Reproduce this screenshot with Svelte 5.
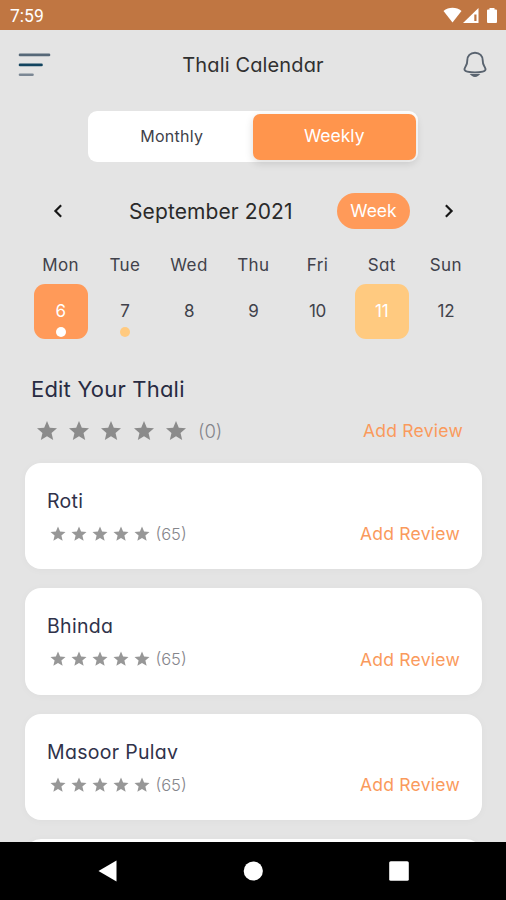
<script>
  let view = "Weekly";
  let selected = 6;

  const views = ["Monthly", "Weekly"];

  const days = [
    { name: "Mon", date: 6, dot: true },
    { name: "Tue", date: 7, dot: true },
    { name: "Wed", date: 8 },
    { name: "Thu", date: 9 },
    { name: "Fri", date: 10 },
    { name: "Sat", date: 11, today: true },
    { name: "Sun", date: 12 },
  ];

  const dishes = [
    { name: "Roti", reviews: 65 },
    { name: "Bhinda", reviews: 65 },
    { name: "Masoor Pulav", reviews: 65 },
  ];

  const stars = [1, 2, 3, 4, 5];
  const starPath =
    "M12 17.27 18.18 21l-1.64-7.03L22 9.24l-7.19-.61L12 2 9.19 8.63 2 9.24l5.46 4.73L5.82 21z";
</script>

<main>
  <div class="status">
    <span>7:59</span>
    <svg width="56" height="18" viewBox="0 0 56 18" fill="#fff">
      <path d="M0.5 4C5.5-.2 13.5-.2 18.5 4L9.5 15.5z" />
      <path d="M20 16 35.5 1v15z" />
      <path d="M31.3 7.5h2.2V14h-2.2z" fill="#c07642" />
      <path d="M46.5 1h5v1.5h1.5q1 0 1 1V15q0 1-1 1h-8q-1 0-1-1V3.5q0-1 1-1h1.5z" />
    </svg>
  </div>

  <header>
    <svg class="menu" width="34" height="26" viewBox="0 0 34 26" fill="none" stroke-width="2.6" stroke-linecap="round">
      <path d="M2 2.9h29" stroke="#566878" />
      <path d="M2 12.9h21.5" stroke="#12445f" />
      <path d="M2 22.8h12.500" stroke="#7b8794" />
    </svg>
    <h1>Thali Calendar</h1>
    <svg width="26" height="28" viewBox="0 0 26 28" fill="none" stroke="#59636f" stroke-width="1.9" stroke-linecap="round">
      <path d="M13 1.700C8.200 1.700 5.300 5.100 5.300 9.300c0 4.200-.8 4.800-2 6.700-1.600 2.600-.7 4 2 4.600 4.700 1 10.700 1 15.400 0 2.700-.6 3.600-2 2-4.600-1.200-1.900-2-2.500-2-6.700 0-4.200-2.900-7.600-7.700-7.600z" />
      <path d="M10.300 24c1.600 1.300 3.800 1.300 5.400 0z" fill="#59636f" />
    </svg>
  </header>

  <div class="toggle">
    {#each views as v}
      <button class:active={view === v} on:click={() => (view = v)}>{v}</button>
    {/each}
  </div>

  <div class="month">
    <svg width="26" height="26" viewBox="0 0 24 24" fill="#171717">
      <path d="M15.61 7.41 14.2 6l-6 6 6 6 1.41-1.41L11.03 12z" />
    </svg>
    <span class="month-name">September 2021</span>
    <button class="week-btn">Week</button>
    <svg width="26" height="26" viewBox="0 0 24 24" fill="#171717">
      <path d="M8.39 7.41 9.8 6l6 6-6 6-1.41-1.41L12.97 12z" />
    </svg>
  </div>

  <div class="days">
    {#each days as day}
      <div class="day">
        <span class="day-name">{day.name}</span>
        <button
          class="date"
          class:today={day.today}
          class:selected={selected === day.date}
          on:click={() => (selected = day.date)}
        >
          {day.date}
          {#if day.dot}<i class="dot"></i>{/if}
        </button>
      </div>
    {/each}
  </div>

  <section class="thali">
    <h2>Edit Your Thali</h2>
    <div class="rating">
      {#each stars as s}
        <svg viewBox="0 0 24 24"><path d={starPath} /></svg>
      {/each}
      <span class="count">(0)</span>
      <button class="review">Add Review</button>
    </div>
  </section>

  <section class="list">
    {#each dishes as dish}
      <article class="card">
        <h3>{dish.name}</h3>
        <div class="rating small">
          {#each stars as s}
            <svg viewBox="0 0 24 24"><path d={starPath} /></svg>
          {/each}
          <span class="count">({dish.reviews})</span>
          <button class="review">Add Review</button>
        </div>
      </article>
    {/each}
    <article class="card"></article>
  </section>

  <nav>
    <svg width="24" height="24" viewBox="0 0 24 24"><path d="M20.5 1.5v21L2.5 12z" /></svg>
    <svg width="24" height="24" viewBox="0 0 24 24"><circle cx="12.3" cy="12" r="9.6" /></svg>
    <svg width="24" height="24" viewBox="0 0 24 24"><rect x="2.2" y="2.2" width="19.6" height="19.6" rx="1.6" /></svg>
  </nav>
</main>

<style>
  :global(body) {
    margin: 0;
    background: #e4e4e4;
  }

  main {
    display: flex;
    flex-direction: column;
    width: 506px;
    height: 900px;
    overflow: hidden;
    background: #e4e4e4;
    color: #40414a;
    font-family: Inter, "Open Sans", sans-serif;
    font-feature-settings: "cv11";
    font-weight: 400;
  }

  button {
    padding: 0;
    border: none;
    background: none;
    color: inherit;
    font: inherit;
    font-feature-settings: inherit;
    letter-spacing: inherit;
  }

  h1,
  h2,
  h3 {
    margin: 0;
    font-weight: 400;
  }

  .status {
    flex: none;
    display: flex;
    justify-content: space-between;
    align-items: center;
    box-sizing: border-box;
    height: 30px;
    padding: 2px 7px 0 10px;
    background: #c07642;
    color: #fff;
    font: 400 17.5px Roboto, sans-serif;
  }

  header {
    flex: none;
    display: flex;
    justify-content: space-between;
    align-items: center;
    height: 69px;
    padding: 0 18px;
  }

  h1 {
    color: #303030;
    font-size: 20px;
    letter-spacing: 0.15px;
  }

  .menu {
    margin-right: -8px;
  }

  .toggle {
    flex: none;
    display: flex;
    box-sizing: border-box;
    width: 330px;
    height: 51px;
    margin: 12px 0 0 88px;
    padding: 2.5px;
    border-radius: 9px;
    background: #fff;
    font-size: 16px;
    letter-spacing: 0.3px;
  }

  .toggle button {
    flex: 1;
    padding-bottom: 2px;
    border-radius: 7px;
  }

  .toggle .active {
    background: #ff954d;
    color: #fff;
    font-size: 17.5px;
    letter-spacing: 0;
    box-shadow: 0 3px 8px rgba(0, 0, 0, 0.14);
  }

  .month {
    flex: none;
    display: flex;
    align-items: center;
    height: 36px;
    margin-top: 31px;
    padding: 0 44px 0 45px;
  }

  .month-name {
    width: 208px;
    margin-left: 58px;
    color: #2a2a2a;
    font-size: 21px;
    letter-spacing: 0.1px;
    white-space: nowrap;
  }

  .week-btn {
    width: 73px;
    height: 36px;
    margin-right: auto;
    padding-bottom: 1px;
    border-radius: 18px;
    background: #ff9a59;
    color: #fff;
    font-size: 17.5px;
  }

  .days {
    flex: none;
    display: flex;
    margin: 25px 28px 0 28.5px;
  }

  .day {
    flex: 1;
    display: flex;
    flex-direction: column;
    align-items: center;
    gap: 7px;
  }

  .day-name {
    font-size: 17px;
    line-height: 23px;
    letter-spacing: 0.4px;
  }

  .date {
    position: relative;
    width: 54px;
    height: 54.5px;
    border-radius: 11px;
    font-size: 17px;
    letter-spacing: -0.3px;
  }

  .date.today {
    background: #ffca80;
    color: #fff;
  }

  .date.selected {
    background: #ff9a59;
    color: #fff;
  }

  .dot {
    position: absolute;
    left: 22px;
    bottom: 1.5px;
    width: 10px;
    height: 10px;
    border-radius: 50%;
    background: #ffca80;
  }

  .selected .dot {
    background: #fff;
  }

  .thali {
    flex: none;
    padding: 36px 43px 0 31px;
  }

  h2 {
    color: #282b42;
    font-size: 22px;
    line-height: 28px;
    letter-spacing: 0.2px;
  }

  .rating {
    display: flex;
    align-items: center;
    height: 28px;
    margin: 14px 0 0 4px;
  }

  .rating svg {
    flex: none;
    width: 24px;
    height: 24px;
    margin-right: 8.2px;
    fill: #8b8b8b;
  }

  .count {
    margin-left: 2px;
    color: #85858b;
    font-size: 18.5px;
    font-weight: 300;
  }

  .review {
    margin-left: auto;
    color: #fa9a5c;
    font-size: 17.5px;
    letter-spacing: 0.25px;
  }

  .list {
    flex: 1;
    min-height: 0;
    overflow: hidden;
    padding: 18px 24px 0 25px;
  }

  .card {
    box-sizing: border-box;
    height: 106.5px;
    margin-bottom: 19px;
    padding: 25px 22px 0;
    border-radius: 16px;
    background: #fff;
    box-shadow: 0 1px 8px rgba(0, 0, 0, 0.03);
  }

  h3 {
    color: #30324a;
    font-size: 19.5px;
    line-height: 27px;
    letter-spacing: 0.3px;
  }

  .small {
    height: 24px;
    margin: 7px 0 0 2px;
  }

  .small svg {
    width: 18px;
    height: 18px;
    margin-right: 2.9px;
    fill: #979797;
  }

  .small .count {
    font-size: 16.5px;
  }

  nav {
    flex: none;
    display: flex;
    justify-content: center;
    align-items: center;
    gap: 121.5px;
    height: 58px;
    background: #000;
    fill: #fff;
  }
</style>
